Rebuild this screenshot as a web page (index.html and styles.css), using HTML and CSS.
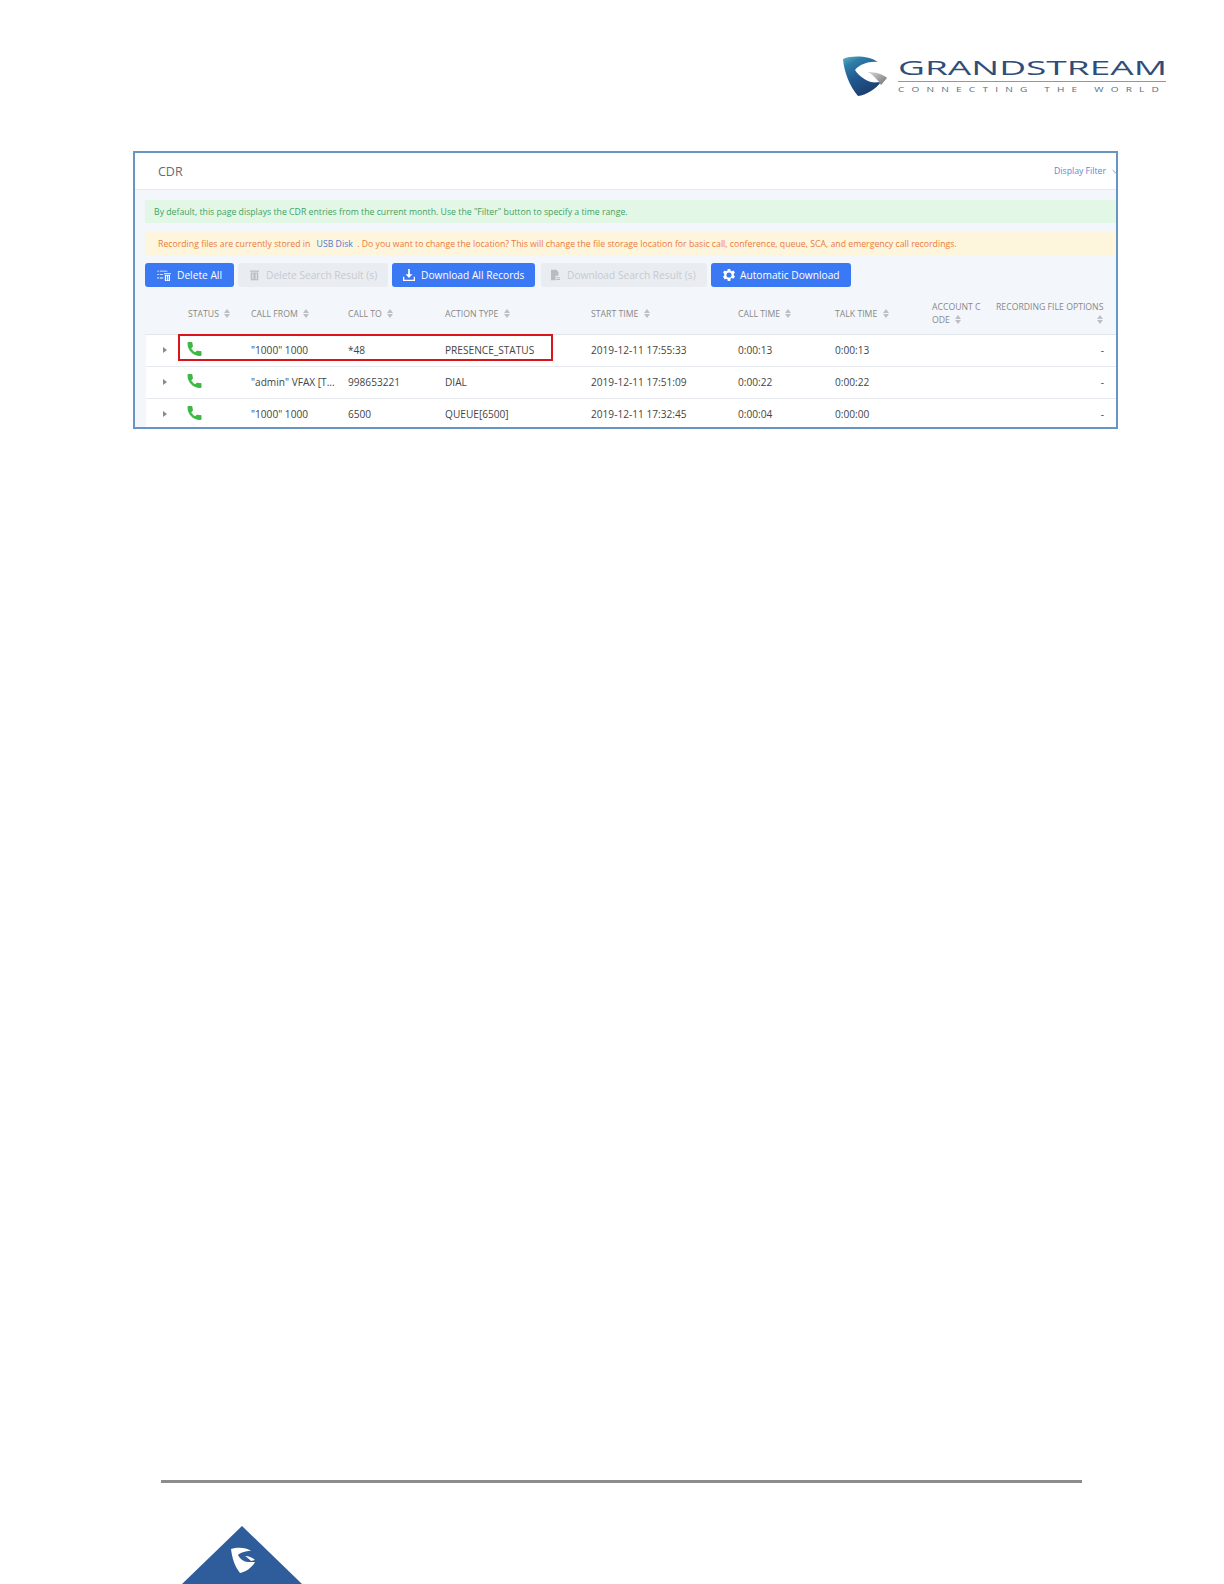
FILE: index.html
```html
<!DOCTYPE html>
<html lang="en">
<head>
<meta charset="utf-8">
<title>CDR</title>
<link rel="stylesheet" href="styles.css">
</head>
<body>
<svg class="defs" aria-hidden="true">
  <defs>
    <linearGradient id="gsBlue" x1="0" y1="0" x2="0.5" y2="1">
      <stop offset="0" stop-color="#5fb0c4"/>
      <stop offset="0.22" stop-color="#2f7ea8"/>
      <stop offset="0.6" stop-color="#20568f"/>
      <stop offset="1" stop-color="#1d3f70"/>
    </linearGradient>
    <linearGradient id="gsGray" x1="0" y1="0" x2="1" y2="1">
      <stop offset="0" stop-color="#d8dadb"/>
      <stop offset="1" stop-color="#6d7074"/>
    </linearGradient>
    <path id="phone" d="M6.62 10.79c1.44 2.83 3.76 5.14 6.59 6.59l2.2-2.2c.27-.27.67-.36 1.02-.24 1.12.37 2.33.57 3.57.57.55 0 1 .45 1 1V20c0 .55-.45 1-1 1-9.39 0-17-7.61-17-17 0-.55.45-1 1-1h3.5c.55 0 1 .45 1 1 0 1.25.2 2.45.57 3.57.11.35.03.74-.25 1.02l-2.2 2.2z"/>
  </defs>
</svg>

<header class="page-header">
  <svg class="logo" viewBox="0 0 340 44" role="img" aria-label="Grandstream">
    <path fill="url(#gsBlue)" d="M1 5C11 1 27 2 36 8C27 7 18 10 13 16C17 22 23 26 29 28C33 29 37 28 39 28C34 35 24 41 16 42C8 33 2 18 1 5Z"/>
    <path fill="url(#gsGray)" d="M26 18C33 18 41 20 45 24L39 31C36 26 31 21 26 18Z"/>
    <text class="logo-name" x="56" y="20.500" textLength="269" lengthAdjust="spacingAndGlyphs">GRANDSTREAM</text>
    <rect class="logo-line" x="56" y="27" width="268" height="1"/>
    <text class="logo-tag" x="56" y="37.500" textLength="268" lengthAdjust="spacingAndGlyphs">CONNECTING THE WORLD</text>
  </svg>
</header>

<main class="frame">
  <div class="frame-title">
    <span class="cdr">CDR</span>
    <span class="display-filter">Display Filter
      <svg class="chev" viewBox="0 0 10 6"><path d="M1 1l4 4 4-4" fill="none" stroke="#5d85d8" stroke-width="1.2"/></svg>
    </span>
  </div>

  <div class="content">
    <div class="alert alert-green">By default, this page displays the CDR entries from the current month. Use the "Filter" button to specify a time range.</div>
    <div class="alert alert-orange">Recording files are currently stored in <a class="usb">USB Disk</a> . Do you want to change the location? This will change the file storage location for basic call, conference, queue, SCA, and emergency call recordings.</div>

    <div class="toolbar">
      <button class="btn btn-delete">
        <svg class="ico" viewBox="0 0 16 14"><path fill="#fff" d="M0 2h2v1H0zM3 2h9v1H3zM0 6h2v1H0zM3 6h4v1H3zM0 10h2v1H0zM3 10h4v1H3zM8 5h8v1H8zM9 7h6v7H9zM10.500 8v5h1V8zM12.500 8v5h1V8z" fill-rule="evenodd"/></svg>
        Delete All
      </button>
      <button class="btn btn-off btn-delsearch">
        <svg class="ico ico-narrow" viewBox="0 0 12 14"><path fill="#b9bdc2" d="M0 1h12v1.500H0zM1 3.500h10V14H1zM3 5v7.500h1.500V5zM7.500 5v7.500H9V5z" fill-rule="evenodd"/></svg>
        Delete Search Result (s)
      </button>
      <button class="btn btn-dl">
        <svg class="ico ico-dl" viewBox="0 0 14 14"><path fill="#fff" d="M6 0h2v6h3L7 10.500 3 6h3zM0 9h1.500v3.500h11V9H14v5H0z"/></svg>
        Download All Records
      </button>
      <button class="btn btn-off btn-dlsearch">
        <svg class="ico ico-narrow" viewBox="0 0 12 14"><path fill="#b9bdc2" d="M0 0h7l3 3v5H6v6H0zM7 10h5v1H7zM7 12h5v1.500H7z"/></svg>
        Download Search Result (s)
      </button>
      <button class="btn btn-auto">
        <svg class="ico ico-dl" viewBox="0 0 14 14"><path fill="#fff" fill-rule="evenodd" d="M5.500 0h3l.4 1.900 1.500.7L12.100 1.700 14 4.200l-1.400 1.300v2l1.400 1.300-1.900 2.500-1.700-.9-1.500.7L8.500 14h-3l-.4-1.900-1.500-.7-1.700.9L0 8.800l1.400-1.300v-2L0 4.200l1.900-2.500 1.700.9 1.500-.7zM7 4a3 3 0 1 0 0 6 3 3 0 0 0 0-6z"/></svg>
        Automatic Download
      </button>
    </div>

    <div class="table">
      <div class="row head">
        <span></span>
        <span>STATUS <i class="sort"></i></span>
        <span>CALL FROM <i class="sort"></i></span>
        <span>CALL TO <i class="sort"></i></span>
        <span>ACTION TYPE <i class="sort"></i></span>
        <span>START TIME <i class="sort"></i></span>
        <span>CALL TIME <i class="sort"></i></span>
        <span>TALK TIME <i class="sort"></i></span>
        <span class="wrap">ACCOUNT C<br>ODE <i class="sort"></i></span>
        <span class="wrap right">RECORDING FILE OPTIONS<br><i class="sort"></i></span>
      </div>

      <div class="row body-row">
        <i class="expand"></i>
        <svg class="phone" viewBox="3 3 18 18"><use href="#phone"/></svg>
        <span>"1000" 1000</span>
        <span>*48</span>
        <span>PRESENCE_STATUS</span>
        <span>2019-12-11 17:55:33</span>
        <span>0:00:13</span>
        <span>0:00:13</span>
        <span></span>
        <span class="right dash">-</span>
      </div>

      <div class="row body-row">
        <i class="expand"></i>
        <svg class="phone" viewBox="3 3 18 18"><use href="#phone"/></svg>
        <span>"admin" VFAX [T...</span>
        <span>998653221</span>
        <span>DIAL</span>
        <span>2019-12-11 17:51:09</span>
        <span>0:00:22</span>
        <span>0:00:22</span>
        <span></span>
        <span class="right dash">-</span>
      </div>

      <div class="row body-row">
        <i class="expand"></i>
        <svg class="phone" viewBox="3 3 18 18"><use href="#phone"/></svg>
        <span>"1000" 1000</span>
        <span>6500</span>
        <span>QUEUE[6500]</span>
        <span>2019-12-11 17:32:45</span>
        <span>0:00:04</span>
        <span>0:00:00</span>
        <span></span>
        <span class="right dash">-</span>
      </div>

      <div class="highlight"></div>
    </div>
  </div>
</main>

<footer class="page-footer">
  <div class="rule"></div>
  <svg class="corner" viewBox="0 0 120 58" aria-hidden="true">
    <path fill="#2f5d9b" d="M60 0L120 58H0Z"/>
    <path fill="#fff" d="M49 23C55 21 64 21 69 25C63 25 58 27 56 29C58 33 62 36 66 36L73 36C70 42 63 46 58 47C53 41 50 32 49 23Z"/>
    <path fill="#fff" d="M63 30C67 30 71 32 73 34L69 35C67 33 65 31 63 30Z"/>
  </svg>
</footer>
</body>
</html>
```

FILE: styles.css
```css
* { box-sizing: border-box; }

html, body {
  margin: 0;
  padding: 0;
  background: #fff;
}

body {
  width: 1224px;
  height: 1584px;
  overflow: hidden;
  font-family: "Open Sans", "Liberation Sans", sans-serif;
}

.defs { display: block; width: 0; height: 0; }

.page-header {
  height: 151px;
  padding: 54px 0 0 842px;
}

.logo { display: block; width: 340px; height: 44px; }
.logo-name {
  font-family: "Open Sans", "Liberation Sans", sans-serif;
  font-weight: 400;
  font-size: 19.500px;
  fill: #2f4d78;
}
.logo-line { fill: #8a99ad; }
.logo-tag {
  font-family: "Open Sans", "Liberation Sans", sans-serif;
  font-size: 7px;
  letter-spacing: 5px;
  fill: #5a6b82;
}

.frame {
  width: 985px;
  height: 278px;
  margin-left: 133px;
  border: 2px solid #6896c4;
  overflow: hidden;
  background: #f3f7fb;
}

.frame-title {
  height: 37px;
  display: flex;
  align-items: center;
  justify-content: space-between;
  padding: 1px 0 0 23px;
  background: #fff;
  border-bottom: 1px solid #e6eaef;
}

.cdr { font-size: 12.500px; color: #6a6a6a; }

.display-filter {
  display: flex;
  align-items: center;
  gap: 6px;
  font-size: 8.700px;
  color: #5d85d8;
  white-space: nowrap;
  margin-right: -3px;
  margin-top: -1px;
}
.chev { width: 7px; height: 5px; }

.content { padding: 10px 0 0 10px; }

.alert {
  height: 23px;
  line-height: 24px;
  font-size: 8.720px;
  white-space: nowrap;
}
.alert-green {
  background: #e3f7e6;
  color: #3ea364;
  padding-left: 9px;
  margin-bottom: 9px;
}
.alert-orange {
  background: #fdf5dc;
  color: #ee7b3c;
  padding-left: 13px;
}
.usb { color: #4e7bd2; margin: 0 2px 0 4px; }

.toolbar {
  display: flex;
  margin-top: 8px;
  gap: 4px;
}

.btn {
  display: flex;
  flex: none;
  align-items: center;
  height: 24px;
  padding: 0 0 0 12px;
  gap: 6px;
  border: 0;
  border-radius: 3px;
  background: #3b78f3;
  color: #fff;
  font-family: inherit;
  font-size: 10.200px;
  white-space: nowrap;
}
.btn-off { background: #e9edf1; color: #c6cacf; gap: 7px; }
.btn-delete { width: 89px; }
.btn-delsearch { width: 150px; }
.btn-dl { width: 143px; padding-left: 11px; }
.btn-dlsearch { width: 166px; margin-left: 2px; padding-left: 10px; }
.btn-auto { width: 140px; gap: 5px; }

.ico { width: 14px; height: 12px; flex: none; }
.ico-narrow { width: 9px; }
.ico-dl { width: 12px; }

.table { position: relative; }

.row {
  display: grid;
  grid-template-columns: 43px 63px 97px 97px 146px 147px 97px 97px 64px 121px;
  align-items: center;
}

.head {
  height: 48px;
  padding-top: 6px;
  font-size: 8.700px;
  color: #888;
  border-bottom: 1px solid #e2e7ec;
  white-space: nowrap;
}
.head > span { display: block; }
.wrap { line-height: 12.500px; }
.right { text-align: right; padding-right: 14px; }

.body-row {
  height: 32px;
  margin-left: 1px;
  padding-bottom: 1px;
  background: #fff;
  font-size: 10.150px;
  color: #444;
  border-bottom: 1px solid #e6eaef;
  white-space: nowrap;
  grid-template-columns: 42px 63px 97px 97px 146px 147px 97px 97px 64px 121px;
}
.dash { padding-right: 13px; }

.phone {
  width: 13px;
  height: 14px;
  fill: #3cb843;
  stroke: #3cb843;
  stroke-width: 1.400;
  stroke-linejoin: round;
  overflow: visible;
  margin-top: -3px;
}

.expand {
  justify-self: start;
  margin-left: 17px;
  width: 0;
  height: 0;
  border-left: 4px solid #8a8a8a;
  border-top: 3px solid transparent;
  border-bottom: 3px solid transparent;
}

.sort {
  display: inline-block;
  position: relative;
  width: 6px;
  height: 9px;
  margin-left: 3px;
  vertical-align: -1px;
}
.sort::before, .sort::after {
  content: "";
  position: absolute;
  left: 0;
  border-left: 3px solid transparent;
  border-right: 3px solid transparent;
}
.sort::before { top: 0; border-bottom: 4px solid #bcc0c4; }
.sort::after { bottom: 0; border-top: 4px solid #bcc0c4; }

.highlight {
  position: absolute;
  left: 33px;
  top: 47px;
  width: 375px;
  height: 27px;
  border: 2px solid #d9141b;
}

.rule {
  width: 921px;
  height: 3px;
  margin: 1051px 0 0 161px;
  background: #8c8c8c;
}

.corner {
  display: block;
  width: 120px;
  height: 58px;
  margin: 43px 0 0 182px;
}
```
